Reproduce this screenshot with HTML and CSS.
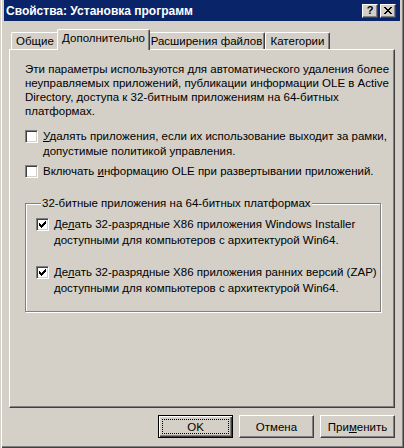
FILE: index.html
```html
<!DOCTYPE html>
<html lang="ru">

<head>
    <meta charset="UTF-8">
    <meta name="viewport" content="width=device-width, initial-scale=1.0">
    <title>Свойства: Установка программ</title>
    <link rel="stylesheet" href="styles.css">
</head>

<body>
    <div class="window">
        <div class="titlebar">
            <span class="title">Свойства: Установка программ</span>
            <div class="caption-buttons">
                <span class="caption-btn help">?</span>
                <span class="caption-btn">
                    <svg width="8" height="7" viewBox="0 0 8 7" shape-rendering="crispEdges">
                        <path d="M0 0h2v1H0z M6 0h2v1H6z M1 1h2v1H1z M5 1h2v1H5z M2 2h4v1H2z M3 3h2v1H3z M2 4h4v1H2z M1 5h2v1H1z M5 5h2v1H5z M0 6h2v1H0z M6 6h2v1H6z" fill="#000" />
                    </svg>
                </span>
            </div>
        </div>

        <div class="client">
            <!-- вкладки -->
            <div class="tabs">
                <div class="tab tab-general">Общие</div>
                <div class="tab tab-advanced active">Дополнительно</div>
                <div class="tab tab-ext">Расширения файлов</div>
                <div class="tab tab-cat">Категории</div>
            </div>

            <div class="panel">
                <p class="intro">Эти параметры используются для автоматического удаления более<br>
                    неуправляемых приложений, публикации информации OLE в Active<br>
                    Directory, доступа к 32-битным приложениям на 64-битных<br>
                    платформах.</p>

                <div class="check check-remove">
                    <span class="box"></span>
                    <span class="check-label"><u>У</u>далять приложения, если их использование выходит за рамки,<br>допустимые политикой управления.</span>
                </div>

                <div class="check check-ole">
                    <span class="box"></span>
                    <span class="check-label">Включать <u>и</u>нформацию OLE при развертывании приложений.</span>
                </div>

                <div class="group">
                    <div class="group-title">32-битные приложения на 64-битных платформах</div>

                    <div class="check check-msi">
                        <span class="box checked">
                            <svg width="7" height="7" viewBox="0 0 7 7" shape-rendering="crispEdges">
                                <path d="M0 2h1v3H0z M1 3h1v3H1z M2 4h1v3H2z M3 3h1v3H3z M4 2h1v3H4z M5 1h1v3H5z M6 0h1v3H6z" fill="#000" />
                            </svg>
                        </span>
                        <span class="check-label">Де<u>л</u>ать 32-разрядные X86 приложения Windows Installer<br>доступными для компьютеров с архитектурой Win64.</span>
                    </div>

                    <div class="check check-zap">
                        <span class="box checked">
                            <svg width="7" height="7" viewBox="0 0 7 7" shape-rendering="crispEdges">
                                <path d="M0 2h1v3H0z M1 3h1v3H1z M2 4h1v3H2z M3 3h1v3H3z M4 2h1v3H4z M5 1h1v3H5z M6 0h1v3H6z" fill="#000" />
                            </svg>
                        </span>
                        <span class="check-label">Де<u>л</u>ать 32-разрядные X86 приложения ранних версий (ZAP)<br>доступными для компьютеров с архитектурой Win64.</span>
                    </div>
                </div>
            </div>

            <div class="buttons">
                <button class="btn default">OK</button>
                <button class="btn">Отмена</button>
                <button class="btn">При<u>м</u>енить</button>
            </div>
        </div>
    </div>
</body>

</html>
```

FILE: styles.css
```css
* {
    box-sizing: border-box;
}

body {
    margin: 0;
    background-color: #D4D0C8;
    font-family: 'Liberation Sans', Arial, sans-serif;
    font-size: 11.5px;
    color: #000;
}

.window {
    width: 404px;
    height: 448px;
    padding: 0 4px 4px 4px;
    background-color: #D4D0C8;
    box-shadow: inset 1px 0 #D4D0C8, inset 2px 0 #fff,
        inset -1px -1px #404040, inset -2px -2px #808080;
}

.titlebar {
    height: 21px;
    background-color: #0A246A;
    display: flex;
    align-items: center;
    justify-content: space-between;
    padding: 0 4px 0 2px;
}

.title {
    color: #fff;
    font-weight: bold;
    font-size: 12px;
}

.caption-buttons {
    display: flex;
    gap: 2px;
}

.caption-btn {
    width: 16px;
    height: 14px;
    display: flex;
    align-items: center;
    justify-content: center;
    background-color: #D4D0C8;
    border: 1px solid;
    border-color: #fff #404040 #404040 #fff;
    box-shadow: inset -1px -1px #808080;
    font-weight: bold;
    font-size: 11px;
    line-height: 11px;
}

.client {
    padding: 8px 5px 0 5px;
}

/* вкладки */
.tabs {
    display: flex;
    align-items: flex-end;
    padding-left: 2px;
    height: 20px;
}

.tab {
    height: 17px;
    padding-top: 1px;
    text-align: center;
    line-height: 14px;
    white-space: nowrap;
    border-top: 1px solid #fff;
    border-left: 1px solid #fff;
    border-right: 1px solid #404040;
    border-radius: 2px 2px 0 0;
    box-shadow: inset -1px 0 #808080;
    background-color: #D4D0C8;
}

.tab-general {
    width: 48px;
}

.tab-advanced {
    width: 89px;
}

.tab-ext {
    width: 117px;
}

.tab-cat {
    width: 65px;
}

.tab.active {
    position: relative;
    z-index: 1;
    width: 93px;
    height: 21px;
    margin: 0 -2px -1px -2px;
    padding-top: 1px;
}

.panel {
    height: 359px;
    padding: 12px 13px 0 15px;
    border-top: 1px solid #fff;
    border-left: 1px solid #fff;
    border-right: 1px solid #404040;
    border-bottom: 1px solid #404040;
    box-shadow: inset -1px -1px #808080;
}

.intro {
    margin: 0;
    line-height: 14px;
    white-space: nowrap;
}

.check {
    display: flex;
    align-items: flex-start;
    gap: 5px;
    white-space: nowrap;
}

.check-label {
    line-height: 15px;
}

.check-remove {
    margin-top: 11px;
}

.check-ole {
    margin-top: 5px;
}

.box {
    flex: none;
    width: 13px;
    height: 13px;
    margin-top: 1px;
    display: flex;
    align-items: center;
    justify-content: center;
    background-color: #fff;
    border: 1px solid;
    border-color: #808080 #fff #fff #808080;
    box-shadow: inset 1px 1px #404040, inset -1px -1px #D4D0C8;
}

.group {
    margin-top: 24px;
    width: 356px;
    padding: 0 10px 15px 10px;
    border: 1px solid #808080;
    box-shadow: inset 1px 1px #fff, 1px 1px #fff;
}

.group-title {
    width: fit-content;
    margin: -7px 0 0 5px;
    padding: 0 1px;
    line-height: 13px;
    background-color: #D4D0C8;
}

.group .check-label {
    line-height: 16px;
}

.group .box {
    margin-top: 2px;
}

.check-msi {
    margin-top: 6px;
}

.check-zap {
    margin-top: 16px;
}

.buttons {
    display: flex;
    justify-content: flex-end;
    gap: 6px;
    margin-top: 7px;
}

.btn {
    width: 75px;
    height: 23px;
    padding: 0;
    font-family: inherit;
    font-size: 11.5px;
    color: #000;
    background-color: #D4D0C8;
    border: 1px solid;
    border-color: #fff #404040 #404040 #fff;
    box-shadow: inset -1px -1px #808080;
}

.btn.default {
    position: relative;
    border: 1px solid #000;
    box-shadow: inset 1px 1px #fff, inset -1px -1px #404040, inset -2px -2px #808080;
}

.btn.default::after {
    content: "";
    position: absolute;
    inset: 3px;
    border: 1px dotted #000;
}
```
